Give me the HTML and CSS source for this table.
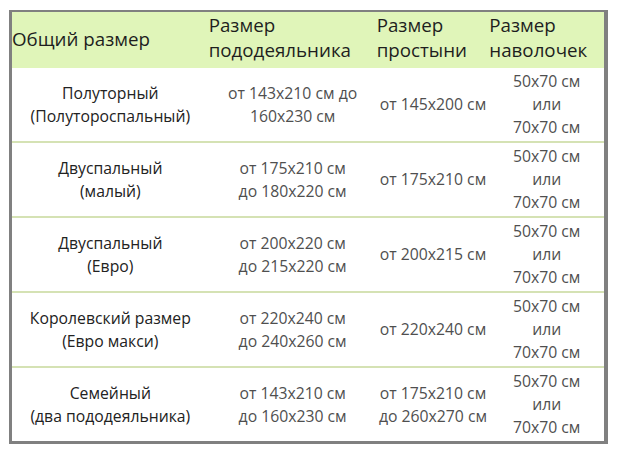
FILE: index.html
```html
<!DOCTYPE html>
<html lang="ru">
<head>
<meta charset="utf-8">
<link rel="stylesheet" href="styles.css">
</head>
<body>
<table class="sizes">
  <colgroup>
    <col class="c1"><col class="c2"><col class="c3"><col class="c4">
  </colgroup>
  <thead>
    <tr>
      <th class="first">Общий размер</th>
      <th>Размер<br>пододеяльника</th>
      <th>Размер<br>простыни</th>
      <th>Размер<br>наволочек</th>
    </tr>
  </thead>
  <tbody>
    <tr>
      <td class="name">Полуторный<br>(Полутороспальный)</td>
      <td>от 143x210 см до<br>160x230 см</td>
      <td>от 145x200 см</td>
      <td>50x70 см<br>или<br>70x70 см</td>
    </tr>
    <tr>
      <td class="name">Двуспальный<br>(малый)</td>
      <td>от 175x210 см<br>до 180x220 см</td>
      <td>от 175x210 см</td>
      <td>50x70 см<br>или<br>70x70 см</td>
    </tr>
    <tr>
      <td class="name">Двуспальный<br>(Евро)</td>
      <td>от 200x220 см<br>до 215x220 см</td>
      <td>от 200x215 см</td>
      <td>50x70 см<br>или<br>70x70 см</td>
    </tr>
    <tr>
      <td class="name">Королевский размер<br>(Евро макси)</td>
      <td>от 220x240 см<br>до 240x260 см</td>
      <td>от 220x240 см</td>
      <td>50x70 см<br>или<br>70x70 см</td>
    </tr>
    <tr>
      <td class="name">Семейный<br>(два пододеяльника)</td>
      <td>от 143x210 см<br>до 160x230 см</td>
      <td>от 175x210 см<br>до 260x270 см</td>
      <td>50x70 см<br>или<br>70x70 см</td>
    </tr>
  </tbody>
</table>
</body>
</html>
```
FILE: styles.css
```css
html, body {
  margin: 0;
  padding: 0;
  background: #ffffff;
}
body {
  padding: 10px 0 0 9px;
  font-family: "Open Sans", "DejaVu Sans", sans-serif;
}
.sizes {
  border-collapse: collapse;
  table-layout: fixed;
  width: 599px;
  border-style: solid;
  border-color: #808080;
  border-width: 2px 4px 3px 3px;
}
.c1 { width: 197px; }
.c2 { width: 167px; }
.c3 { width: 112px; }
.c4 { width: 116px; }
.sizes th {
  background: #e0f5b9;
  color: #1e1e1e;
  font-weight: normal;
  font-size: 18.75px;
  line-height: 25px;
  text-align: left;
  padding: 0 0 6px 0;
  height: 50px;
  vertical-align: middle;
  white-space: nowrap;
}
.sizes th.first {
  padding: 1px 0 5px 0;
}
.sizes td {
  font-size: 15.75px;
  line-height: 23px;
  color: #4f4f4f;
  text-align: center;
  vertical-align: middle;
  padding: 2px 0;
  height: 69px;
  white-space: nowrap;
}
.sizes td.name {
  color: #222222;
}
.sizes tbody tr + tr td {
  border-top: 2px solid #d5e2b4;
}
```
